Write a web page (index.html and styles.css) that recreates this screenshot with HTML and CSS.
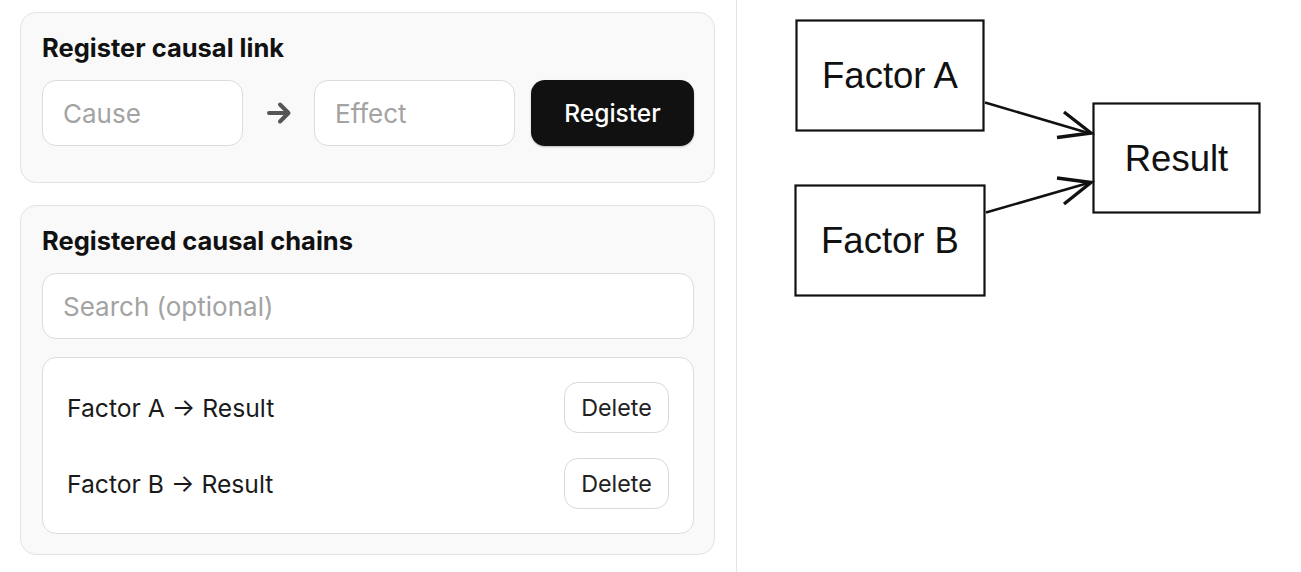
FILE: index.html
```html
<!DOCTYPE html>
<html lang="en">
<head>
<meta charset="utf-8">
<title>Causal links</title>
<link rel="stylesheet" href="styles.css">
</head>
<body>
<div class="app">
  <section class="side">
    <div class="card card-register">
      <h2 class="card-title">Register causal link</h2>
      <div class="link-row">
        <input class="field" type="text" placeholder="Cause">
        <span class="link-arrow" aria-hidden="true">
          <svg width="26" height="24" viewBox="0 0 26 24"><path d="M3 12 H22 M14 3.5 L22.5 12 L14 20.5" fill="none" stroke="#555" stroke-width="4" stroke-linecap="round" stroke-linejoin="round"/></svg>
        </span>
        <input class="field" type="text" placeholder="Effect">
        <button class="btn-primary" type="button">Register</button>
      </div>
    </div>
    <div class="card card-list">
      <h2 class="card-title">Registered causal chains</h2>
      <input class="field field-search" type="text" placeholder="Search (optional)">
      <ul class="chain-list">
        <li class="chain-item"><span class="chain-text">Factor A → Result</span><button class="btn-delete" type="button">Delete</button></li>
        <li class="chain-item"><span class="chain-text">Factor B → Result</span><button class="btn-delete" type="button">Delete</button></li>
      </ul>
    </div>
  </section>
  <section class="canvas">
    <svg class="graph" width="564" height="572" viewBox="737 0 564 572">
      <rect x="796.5" y="20.5" width="187" height="110" class="node"/>
      <rect x="795.5" y="185.5" width="189" height="110" class="node"/>
      <rect x="1093.5" y="103.5" width="166" height="109" class="node"/>
      <text x="890" y="88" class="label" text-anchor="middle">Factor A</text>
      <text x="890" y="253" class="label" text-anchor="middle">Factor B</text>
      <text x="1176.5" y="170.5" class="label" text-anchor="middle">Result</text>
      <line x1="985" y1="102.5" x2="1090" y2="133.5" class="edge"/>
      <line x1="986" y1="212.5" x2="1090" y2="182.5" class="edge"/>
      <path d="M1064 112 L1091 133 L1057 137.5" class="head"/>
      <path d="M1057 178 L1091 182.5 L1064 204" class="head"/>
    </svg>
  </section>
</div>
</body>
</html>
```
FILE: styles.css
```css
* { box-sizing: border-box; }
html, body { margin: 0; padding: 0; background: #fff; }
body {
  font-family: Inter, "Noto Sans", "Liberation Sans", sans-serif;
  color: #111;
}
.app {
  display: flex;
  height: 572px;
}
.side {
  width: 737px;
  flex: none;
  border-right: 1px solid #e4e4e4;
  padding: 12px 21px 0 20px;
  display: flex;
  flex-direction: column;
  gap: 22px;
}
.card {
  background: #f9f9f9;
  border: 1px solid #e3e3e3;
  border-radius: 16px;
  padding: 20px 20px 20px 21px;
  display: flex;
  flex-direction: column;
}
.card-title {
  margin: 0 0 17px;
  font-size: 25.5px;
  line-height: 30px;
  font-weight: 700;
  color: #111;
}
.link-row {
  display: flex;
  align-items: center;
  gap: 16px;
  margin-bottom: 16px;
}
.field {
  flex: 1;
  min-width: 0;
  height: 66px;
  border: 1px solid #dcdcdc;
  border-radius: 14px;
  background: #fff;
  padding: 0 20px;
  font-family: inherit;
  font-size: 26px;
  color: #111;
  outline: none;
}
.field::placeholder { color: #a3a3a3; }
.link-arrow {
  width: 39px;
  flex: none;
  display: flex;
  justify-content: center;
  align-items: center;
}
.btn-primary {
  flex: none;
  width: 163px;
  height: 66px;
  border: none;
  border-radius: 14px;
  background: #111;
  color: #fff;
  font-family: inherit;
  font-size: 24.5px;
  font-weight: 500;
  box-shadow: 0 1px 2px rgba(0,0,0,0.25);
}
.field-search {
  flex: none;
  width: 100%;
  margin-bottom: 18px;
}
.chain-list {
  list-style: none;
  margin: 0;
  padding: 24px;
  background: #fff;
  border: 1px solid #dcdcdc;
  border-radius: 14px;
  display: flex;
  flex-direction: column;
  gap: 25px;
}
.chain-item {
  display: flex;
  align-items: center;
  justify-content: space-between;
}
.chain-text {
  font-size: 24.7px;
  color: #1a1a1a;
}
.btn-delete {
  width: 105px;
  height: 51px;
  border: 1px solid #d9d9d9;
  border-radius: 14px;
  background: #fff;
  font-family: inherit;
  font-size: 23.3px;
  color: #222;
  padding: 0;
}
.canvas {
  flex: 1;
}
.graph { display: block; }
.node { fill: #fff; stroke: #111; stroke-width: 2.2; }
.label {
  font-family: "Liberation Sans", Arial, sans-serif;
  font-size: 36.5px;
  fill: #111;
}
.edge { stroke: #111; stroke-width: 2.6; }
.head { fill: none; stroke: #111; stroke-width: 3.4; stroke-linejoin: miter; }
```
